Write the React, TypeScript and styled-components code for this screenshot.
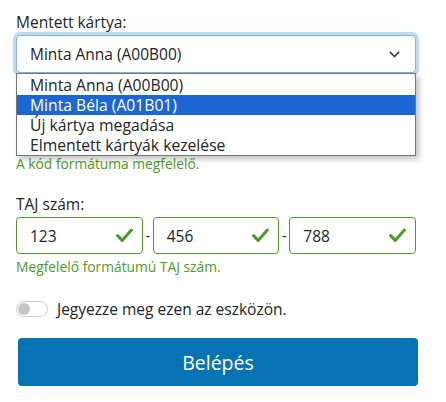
import React from "react";
import styled, { createGlobalStyle } from "styled-components";

const GlobalStyle = createGlobalStyle`
  html, body { margin: 0; padding: 0; background: #ffffff; }
  body {
    font-family: "Open Sans", "Noto Sans", "DejaVu Sans", sans-serif;
    color: #212529;
    -webkit-font-smoothing: antialiased;
  }
  * { box-sizing: border-box; }
`;

const GREEN = "#4c9a2a";

const Form = styled.form`
  width: 432px;
  padding: 10px 0 0 16px;
  display: flex;
  flex-direction: column;
`;

const Field = styled.div<{ $mt?: number }>`
  display: flex;
  flex-direction: column;
  margin-top: ${(p) => p.$mt ?? 0}px;
  width: 400px;
`;

const Label = styled.label`
  font-size: 15.5px;
  line-height: 24px;
  margin-bottom: 1px;
  color: #212529;
`;

const SelectWrap = styled.div`
  position: relative;
  width: 400px;
`;

const SelectBox = styled.div`
  height: 38px;
  border: 1px solid #86b7d9;
  border-radius: 4px;
  box-shadow: 0 0 0 3px rgba(5, 115, 180, 0.25);
  display: flex;
  align-items: center;
  justify-content: space-between;
  padding: 0 15px 0 13px;
  font-size: 15.5px;
  background: #fff;
`;

const Dropdown = styled.ul`
  position: absolute;
  top: 100%;
  left: 0;
  width: 400px;
  height: 83px;
  margin: 0;
  padding: 1px 0 0;
  list-style: none;
  background: #fff;
  border: 1px solid #767676;
  box-shadow: 3px 3px 6px rgba(0, 0, 0, 0.25);
  z-index: 10;
`;

const Option = styled.li<{ $active?: boolean }>`
  height: 20px;
  line-height: 20px;
  padding-left: 13px;
  font-size: 15.7px;
  background: ${(p) => (p.$active ? "#1b66d3" : "transparent")};
  color: ${(p) => (p.$active ? "#ffffff" : "#212529")};
  white-space: nowrap;
`;

/* area of the card-code field, covered by the open list */
const CoveredArea = styled.div`
  height: 81px;
`;

const Feedback = styled.div<{ $mt?: number }>`
  font-size: 13.8px;
  line-height: 20px;
  color: #4f9a26;
  margin-top: ${(p) => p.$mt ?? 0}px;
`;

const TajRow = styled.div`
  display: flex;
  align-items: center;
  width: 400px;
`;

const TajInput = styled.div`
  flex: 1;
  height: 37px;
  border: 1px solid ${GREEN};
  border-radius: 4px;
  display: flex;
  align-items: center;
  justify-content: space-between;
  padding: 0 9px 0 13px;
  font-size: 15.5px;
`;

const Dash = styled.span`
  width: 10px;
  text-align: center;
  font-size: 14px;
  color: #212529;
`;

const ToggleRow = styled.div`
  display: flex;
  align-items: center;
  gap: 9px;
  height: 24px;
  margin-top: 20px;
  font-size: 15.5px;
`;

const Track = styled.span`
  width: 32px;
  height: 16px;
  border: 1px solid #cfcfcf;
  border-radius: 8px;
  display: flex;
  align-items: center;
  padding-left: 1px;
`;

const Knob = styled.span`
  width: 12px;
  height: 12px;
  border-radius: 50%;
  background: #c6c6c6;
`;

const Button = styled.button`
  margin: 17px 0 0 2px;
  width: 400px;
  height: 48px;
  border: none;
  border-radius: 4px;
  background: #0573b4;
  color: #ffffff;
  font-family: inherit;
  font-size: 19.5px;
  cursor: pointer;
`;

const Chevron = () => (
  <svg width="11" height="7" viewBox="0 0 11 7" fill="none">
    <path d="M0.8 0.8 L5.5 5.6 L10.2 0.8" stroke="#343a40" strokeWidth="1.6" />
  </svg>
);

const Check = () => (
  <svg width="17" height="15" viewBox="0 0 17 15" fill="none">
    <path
      d="M1.6 7.6 L6.2 12.4 L15.4 2"
      stroke={GREEN}
      strokeWidth="3"
      strokeLinecap="round"
      strokeLinejoin="round"
    />
  </svg>
);

export default function App() {
  const taj = ["123", "456", "788"];
  return (
    <>
      <GlobalStyle />
      <Form onSubmit={(e) => e.preventDefault()}>
        <Field>
          <Label>Mentett kártya:</Label>
          <SelectWrap>
            <SelectBox>
              <span>Minta Anna (A00B00)</span>
              <Chevron />
            </SelectBox>
            <Dropdown>
              <Option>Minta Anna (A00B00)</Option>
              <Option $active>Minta Béla (A01B01)</Option>
              <Option>Új kártya megadása</Option>
              <Option>Elmentett kártyák kezelése</Option>
            </Dropdown>
          </SelectWrap>
        </Field>
        <Field>
          <CoveredArea />
          <Feedback>A kód formátuma megfelelő.</Feedback>
        </Field>
        <Field $mt={18}>
          <Label>TAJ szám:</Label>
          <TajRow>
            {taj.map((v, i) => (
              <React.Fragment key={v}>
                {i > 0 && <Dash>-</Dash>}
                <TajInput>
                  <span>{v}</span>
                  <Check />
                </TajInput>
              </React.Fragment>
            ))}
          </TajRow>
          <Feedback $mt={3}>Megfelelő formátumú TAJ szám.</Feedback>
        </Field>
        <ToggleRow>
          <Track>
            <Knob />
          </Track>
          <span>Jegyezze meg ezen az eszközön.</span>
        </ToggleRow>
        <Button type="submit">Belépés</Button>
      </Form>
    </>
  );
}
